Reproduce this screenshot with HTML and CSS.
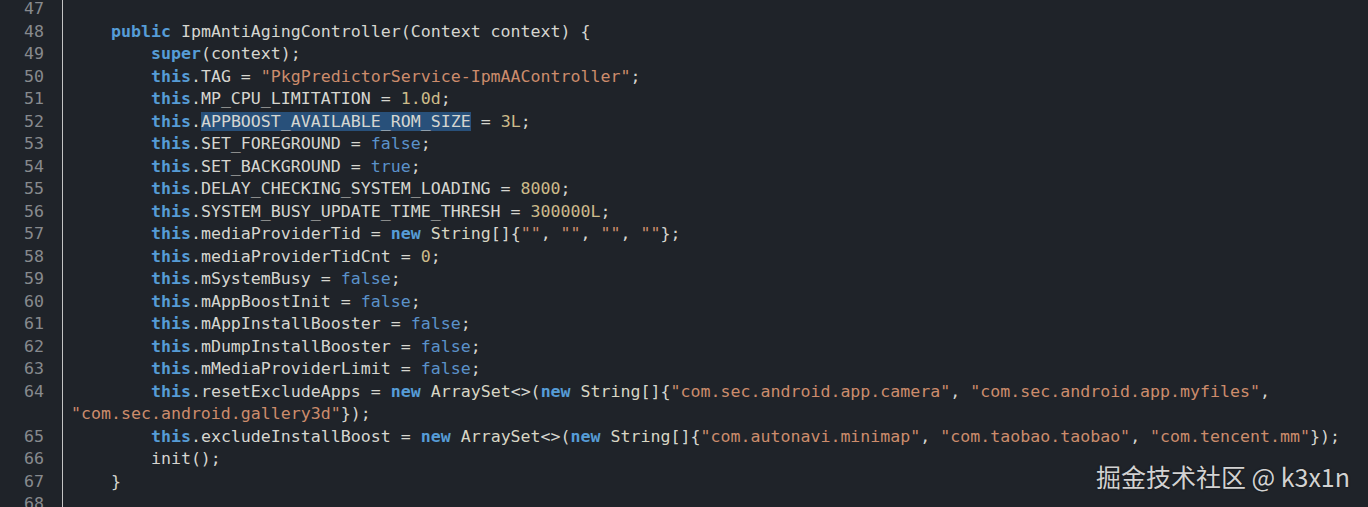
FILE: index.html
```html
<!DOCTYPE html>
<html>
<head>
<meta charset="utf-8">
<link rel="stylesheet" href="styles.css">
</head>
<body>
<div class="editor">
  <div class="row"><span class="ln">47</span><span class="code"></span></div>
  <div class="row"><span class="ln">48</span><span class="code">    <span class="kw">public</span> IpmAntiAgingController(Context context) {</span></div>
  <div class="row"><span class="ln">49</span><span class="code">        <span class="kw">super</span>(context);</span></div>
  <div class="row"><span class="ln">50</span><span class="code">        <span class="kw">this</span>.TAG = <span class="str">"PkgPredictorService-IpmAAController"</span>;</span></div>
  <div class="row"><span class="ln">51</span><span class="code">        <span class="kw">this</span>.MP_CPU_LIMITATION = <span class="num">1.0d</span>;</span></div>
  <div class="row"><span class="ln">52</span><span class="code">        <span class="kw">this</span>.<span class="sel">APPBOOST_AVAILABLE_ROM_SIZE</span> = <span class="num">3L</span>;</span></div>
  <div class="row"><span class="ln">53</span><span class="code">        <span class="kw">this</span>.SET_FOREGROUND = <span class="lit">false</span>;</span></div>
  <div class="row"><span class="ln">54</span><span class="code">        <span class="kw">this</span>.SET_BACKGROUND = <span class="lit">true</span>;</span></div>
  <div class="row"><span class="ln">55</span><span class="code">        <span class="kw">this</span>.DELAY_CHECKING_SYSTEM_LOADING = <span class="num">8000</span>;</span></div>
  <div class="row"><span class="ln">56</span><span class="code">        <span class="kw">this</span>.SYSTEM_BUSY_UPDATE_TIME_THRESH = <span class="num">300000L</span>;</span></div>
  <div class="row"><span class="ln">57</span><span class="code">        <span class="kw">this</span>.mediaProviderTid = <span class="kw">new</span> <span class="ty">String</span>[]{<span class="str">""</span>, <span class="str">""</span>, <span class="str">""</span>, <span class="str">""</span>};</span></div>
  <div class="row"><span class="ln">58</span><span class="code">        <span class="kw">this</span>.mediaProviderTidCnt = <span class="num">0</span>;</span></div>
  <div class="row"><span class="ln">59</span><span class="code">        <span class="kw">this</span>.mSystemBusy = <span class="lit">false</span>;</span></div>
  <div class="row"><span class="ln">60</span><span class="code">        <span class="kw">this</span>.mAppBoostInit = <span class="lit">false</span>;</span></div>
  <div class="row"><span class="ln">61</span><span class="code">        <span class="kw">this</span>.mAppInstallBooster = <span class="lit">false</span>;</span></div>
  <div class="row"><span class="ln">62</span><span class="code">        <span class="kw">this</span>.mDumpInstallBooster = <span class="lit">false</span>;</span></div>
  <div class="row"><span class="ln">63</span><span class="code">        <span class="kw">this</span>.mMediaProviderLimit = <span class="lit">false</span>;</span></div>
  <div class="row"><span class="ln">64</span><span class="code">        <span class="kw">this</span>.resetExcludeApps = <span class="kw">new</span> <span class="ty">ArraySet</span>&lt;&gt;(<span class="kw">new</span> <span class="ty">String</span>[]{<span class="str">"com.sec.android.app.camera"</span>, <span class="str">"com.sec.android.app.myfiles"</span>,
<span class="str">"com.sec.android.gallery3d"</span>});</span></div>
  <div class="row"><span class="ln">65</span><span class="code">        <span class="kw">this</span>.excludeInstallBoost = <span class="kw">new</span> <span class="ty">ArraySet</span>&lt;&gt;(<span class="kw">new</span> <span class="ty">String</span>[]{<span class="str">"com.autonavi.minimap"</span>, <span class="str">"com.taobao.taobao"</span>, <span class="str">"com.tencent.mm"</span>});</span></div>
  <div class="row"><span class="ln">66</span><span class="code">        init();</span></div>
  <div class="row"><span class="ln">67</span><span class="code">    }</span></div>
  <div class="row"><span class="ln">68</span><span class="code"></span></div>
</div>
<div class="watermark">掘金技术社区 @ k3x1n</div>
</body>
</html>
```

FILE: styles.css
```css
html, body {
  margin: 0;
  padding: 0;
  background: #1f2329;
  height: 100%;
  overflow: hidden;
}
body {
  position: relative;
}
.editor {
  margin-top: -2px;
  font-family: "DejaVu Sans Mono", "Liberation Mono", monospace;
  font-size: 16.6px;
  color: #d6d6d0;
}
.row {
  display: flex;
  line-height: 22.5px;
}
.ln {
  flex: 0 0 44px;
  width: 44px;
  padding-right: 18px;
  text-align: right;
  color: #878a8e;
  border-right: 1px solid #c4c4c4;
  box-sizing: content-box;
}
.code {
  flex: 1;
  padding-left: 8px;
  white-space: pre;
}
.kw {
  color: #569cd6;
  font-weight: bold;
}
.lit {
  color: #5b92c9;
}
.str {
  color: #cc8c6c;
}
.num {
  color: #cdbb8a;
}
.ty {
  color: #d8d6c4;
}
.sel {
  background: #28507a;
}
.watermark {
  position: absolute;
  right: 18px;
  bottom: 16px;
  font-family: "Noto Sans CJK SC", "Noto Sans", sans-serif;
  font-size: 25px;
  line-height: 30px;
  color: #d2d2d2;
  text-shadow: 0 0 2px rgba(0,0,0,0.5);
}
```
